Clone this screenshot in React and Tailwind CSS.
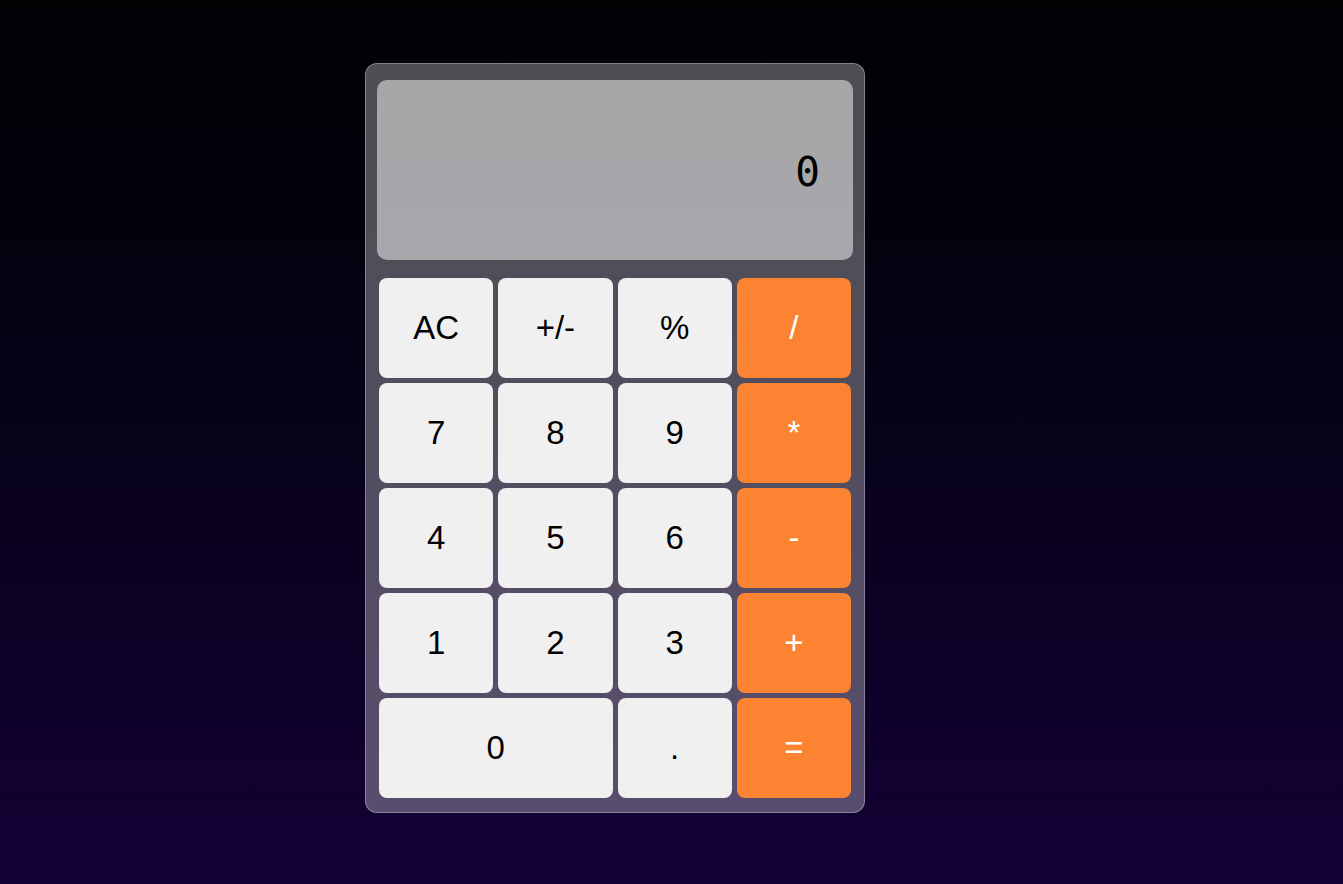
import React, { useState } from "react";

const keys = [
  { label: "AC", kind: "fn" },
  { label: "+/-", kind: "fn" },
  { label: "%", kind: "fn" },
  { label: "/", kind: "op" },
  { label: "7" },
  { label: "8" },
  { label: "9" },
  { label: "*", kind: "op" },
  { label: "4" },
  { label: "5" },
  { label: "6" },
  { label: "-", kind: "op" },
  { label: "1" },
  { label: "2" },
  { label: "3" },
  { label: "+", kind: "op" },
  { label: "0", wide: true },
  { label: "." },
  { label: "=", kind: "op" },
];

const Key = ({ label, kind, wide, onPress }) => {
  const base =
    "h-[100px] rounded-lg text-[33px] flex items-center justify-center select-none cursor-pointer";
  const color =
    kind === "op" ? "bg-[#fb8332] text-white" : "bg-[#f0f0f0] text-black";
  return (
    <button
      onClick={() => onPress(label)}
      className={`${base} ${color} ${wide ? "col-span-2" : ""}`}
    >
      {label}
    </button>
  );
};

export default function App() {
  const [display, setDisplay] = useState("0");

  const press = (k) => {
    if (k === "AC") return setDisplay("0");
    if (k === "=") {
      try {
        // eslint-disable-next-line no-new-func
        const val = Function(`return (${display})`)();
        setDisplay(String(val));
      } catch {
        setDisplay("Error");
      }
      return;
    }
    if (k === "+/-") return setDisplay((d) => (d.startsWith("-") ? d.slice(1) : "-" + d));
    if (k === "%") return setDisplay((d) => String(parseFloat(d) / 100));
    setDisplay((d) => (d === "0" && k !== "." ? k : d + k));
  };

  return (
    <div
      className="min-h-[884px] w-full bg-gradient-to-b from-[#020104] to-[#130035] pt-[63px] pl-[365px]"
      style={{ fontFamily: '"Liberation Sans", Arial, sans-serif' }}
    >
      {/* Calculator body */}
      <div className="w-[500px] rounded-xl border border-white/30 bg-white/30 pt-4 px-[11px] pb-[14px]">
        {/* Display */}
        <div className="h-[180px] rounded-[10px] bg-white/50 flex items-center justify-end pr-[33px] pt-[4px]">
          <span
            className="text-[41px] text-black leading-none"
            style={{ fontFamily: '"DejaVu Sans Mono", "Liberation Mono", monospace' }}
          >
            {display}
          </span>
        </div>

        {/* Keypad */}
        <div className="mt-[18px] px-[2px] grid grid-cols-4 gap-[5px]">
          {keys.map((k) => (
            <Key key={k.label} {...k} onPress={press} />
          ))}
        </div>
      </div>
    </div>
  );
}
